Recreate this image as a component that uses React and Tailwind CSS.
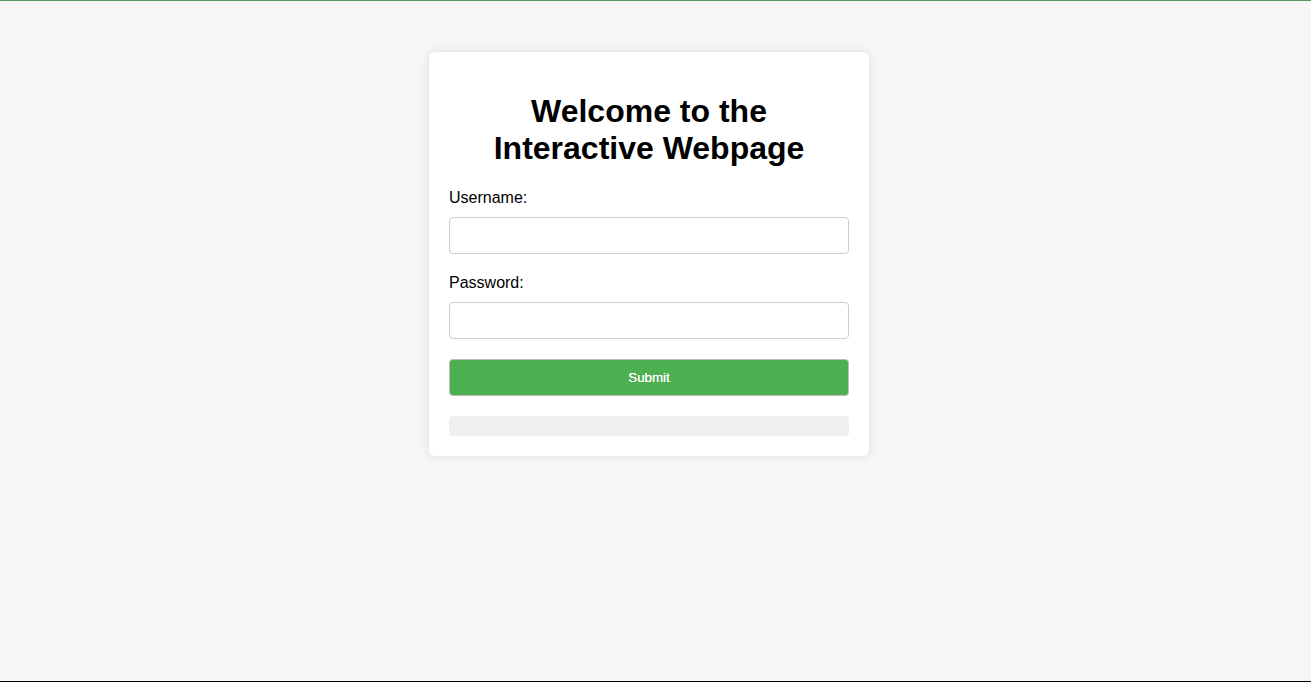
import { useState } from "react";

export default function App() {
  const [username, setUsername] = useState("");
  const [password, setPassword] = useState("");
  const [message, setMessage] = useState("");

  const handleSubmit = (e) => {
    e.preventDefault();
    setMessage(username ? `Hello, ${username}!` : "");
  };

  return (
    <div className="h-[682px] flex flex-col bg-[#f6f6f6] font-['Liberation_Sans',Arial,sans-serif] text-black">
      <div className="h-px bg-[#5a9460]" />
      <div className="flex-1 flex justify-center pt-[51px] pr-[13px]">
        <div className="w-[440px] h-fit bg-white rounded-md shadow-[0_0_10px_rgba(0,0,0,0.1)] p-5">
          <h1 className="text-[32px] leading-[37px] font-bold text-center mt-[21px] mb-[22px]">
            Welcome to the
            <br />
            Interactive Webpage
          </h1>
          <form onSubmit={handleSubmit}>
            <label className="block text-base leading-[18px] mb-[10px]">Username:</label>
            <input
              type="text"
              className="block w-full h-[37px] border border-[#cccccc] rounded px-2 mb-5 outline-none"
              value={username}
              onChange={(e) => setUsername(e.target.value)}
            />
            <label className="block text-base leading-[18px] mb-[10px]">Password:</label>
            <input
              type="password"
              className="block w-full h-[37px] border border-[#cccccc] rounded px-2 mb-5 outline-none"
              value={password}
              onChange={(e) => setPassword(e.target.value)}
            />
            <button
              type="submit"
              className="block w-full h-[37px] bg-[#4caf50] text-white text-[13.33px] font-normal border border-[#bbbbbb] rounded cursor-pointer [text-shadow:0_0_0.4px_#fff]"
            >
              Submit
            </button>
          </form>
          <div className="mt-5 h-5 bg-[#efefef] rounded text-sm leading-5 px-2">{message}</div>
        </div>
      </div>
      <div className="h-px bg-black" />
    </div>
  );
}
